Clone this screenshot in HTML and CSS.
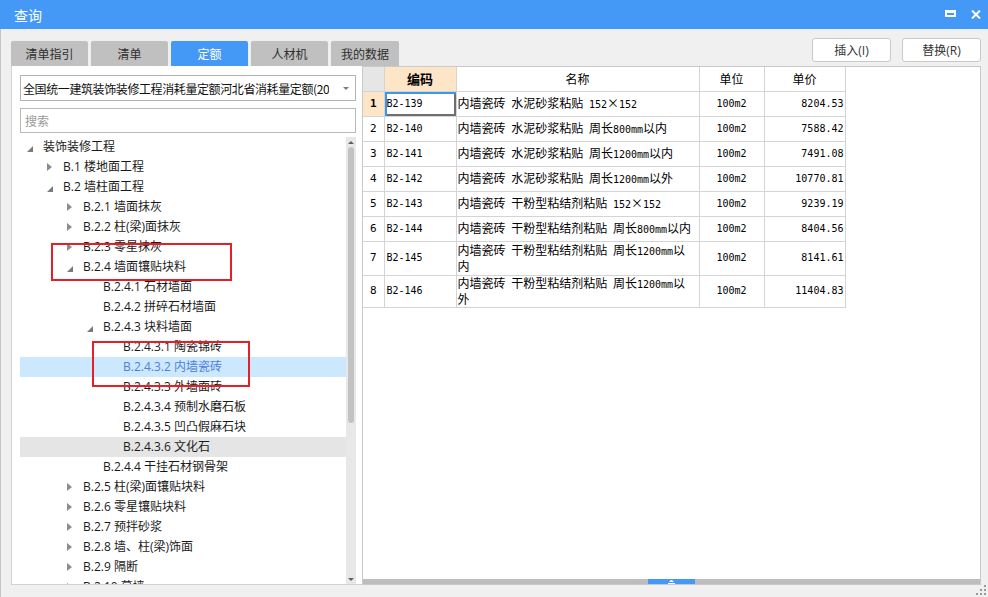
FILE: index.html
```html
<!DOCTYPE html>
<html>
<head>
<meta charset="utf-8">
<title>查询</title>
<link rel="stylesheet" href="styles.css">
</head>
<body>
<div class="window">
  <div class="titlebar">
    <span class="title">查询</span>
    <div class="winbtns">
      <svg class="maxbtn" width="11" height="7" viewBox="0 0 11 7"><path d="M0 0H11V7H0Z M2 3V5H9V3Z" fill="#fff" fill-rule="evenodd"/></svg>
      <svg class="closebtn" width="10" height="9" viewBox="0 0 10 9"><path d="M1 0.5L9 8.5M9 0.5L1 8.5" stroke="#fff" stroke-width="2"/></svg>
    </div>
  </div>
  <div class="body">
    <div class="toprow">
      <div class="tabs">
        <div class="tab">清单指引</div>
        <div class="tab">清单</div>
        <div class="tab active">定额</div>
        <div class="tab">人材机</div>
        <div class="tab narrow">我的数据</div>
      </div>
      <div class="actions">
        <button class="btn">插入(I)</button>
        <button class="btn">替换(R)</button>
      </div>
    </div>
    <div class="main">
      <div class="leftpanel">
        <div class="select">
          <span class="select-text">全国统一建筑装饰装修工程消耗量定额河北省消耗量定额(2015)</span>
          <span class="caret"></span>
        </div>
        <div class="search">搜索</div>
        <div class="treewrap">
          <div class="tree">
            <div class="row l0"><span class="tw open"></span>装饰装修工程</div>
            <div class="row l1"><span class="tw closed"></span>B.1 楼地面工程</div>
            <div class="row l1"><span class="tw open"></span>B.2 墙柱面工程</div>
            <div class="row l2"><span class="tw closed"></span>B.2.1 墙面抹灰</div>
            <div class="row l2"><span class="tw closed"></span>B.2.2 柱(梁)面抹灰</div>
            <div class="row l2"><span class="tw closed"></span>B.2.3 零星抹灰</div>
            <div class="row l2"><span class="tw open"></span>B.2.4 墙面镶贴块料</div>
            <div class="row l3"><span class="tw"></span>B.2.4.1 石材墙面</div>
            <div class="row l3"><span class="tw"></span>B.2.4.2 拼碎石材墙面</div>
            <div class="row l3"><span class="tw open"></span>B.2.4.3 块料墙面</div>
            <div class="row l4"><span class="tw"></span>B.2.4.3.1 陶瓷锦砖</div>
            <div class="row l4 selected"><span class="tw"></span>B.2.4.3.2 内墙瓷砖</div>
            <div class="row l4"><span class="tw"></span>B.2.4.3.3 外墙面砖</div>
            <div class="row l4"><span class="tw"></span>B.2.4.3.4 预制水磨石板</div>
            <div class="row l4"><span class="tw"></span>B.2.4.3.5 凹凸假麻石块</div>
            <div class="row l4 hover"><span class="tw"></span>B.2.4.3.6 文化石</div>
            <div class="row l3"><span class="tw"></span>B.2.4.4 干挂石材钢骨架</div>
            <div class="row l2"><span class="tw closed"></span>B.2.5 柱(梁)面镶贴块料</div>
            <div class="row l2"><span class="tw closed"></span>B.2.6 零星镶贴块料</div>
            <div class="row l2"><span class="tw closed"></span>B.2.7 预拌砂浆</div>
            <div class="row l2"><span class="tw closed"></span>B.2.8 墙、柱(梁)饰面</div>
            <div class="row l2"><span class="tw closed"></span>B.2.9 隔断</div>
            <div class="row l2"><span class="tw closed"></span>B.2.10 幕墙</div>
          </div>
          <div class="vscroll">
            <span class="sarrow up"></span>
            <div class="thumb"></div>
            <span class="sarrow down"></span>
          </div>
        </div>
        <div class="mark mark1"></div>
        <div class="mark mark2"></div>
      </div>
      <div class="rightpanel">
        <table class="grid">
          <colgroup>
            <col class="c-num"><col class="c-code"><col class="c-name"><col class="c-unit"><col class="c-price">
          </colgroup>
          <thead>
            <tr>
              <th class="num corner"></th>
              <th class="code-h">编码</th>
              <th>名称</th>
              <th>单位</th>
              <th>单价</th>
            </tr>
          </thead>
          <tbody>
            <tr>
              <td class="num cur">1</td>
              <td class="code focus">B2-139</td>
              <td class="name">内墙瓷砖 水泥砂浆粘贴 <span class="n">152</span>×<span class="n">152</span></td>
              <td class="unit">100m2</td>
              <td class="price">8204.53</td>
            </tr>
            <tr>
              <td class="num">2</td>
              <td class="code">B2-140</td>
              <td class="name">内墙瓷砖 水泥砂浆粘贴 周长<span class="n">800mm</span>以内</td>
              <td class="unit">100m2</td>
              <td class="price">7588.42</td>
            </tr>
            <tr>
              <td class="num">3</td>
              <td class="code">B2-141</td>
              <td class="name">内墙瓷砖 水泥砂浆粘贴 周长<span class="n">1200mm</span>以内</td>
              <td class="unit">100m2</td>
              <td class="price">7491.08</td>
            </tr>
            <tr>
              <td class="num">4</td>
              <td class="code">B2-142</td>
              <td class="name">内墙瓷砖 水泥砂浆粘贴 周长<span class="n">1200mm</span>以外</td>
              <td class="unit">100m2</td>
              <td class="price">10770.81</td>
            </tr>
            <tr>
              <td class="num">5</td>
              <td class="code">B2-143</td>
              <td class="name">内墙瓷砖 干粉型粘结剂粘贴 <span class="n">152</span>×<span class="n">152</span></td>
              <td class="unit">100m2</td>
              <td class="price">9239.19</td>
            </tr>
            <tr>
              <td class="num">6</td>
              <td class="code">B2-144</td>
              <td class="name">内墙瓷砖 干粉型粘结剂粘贴 周长<span class="n">800mm</span>以内</td>
              <td class="unit">100m2</td>
              <td class="price">8404.56</td>
            </tr>
            <tr class="tall">
              <td class="num">7</td>
              <td class="code">B2-145</td>
              <td class="name">内墙瓷砖 干粉型粘结剂粘贴 周长<span class="n">1200mm</span>以<br>内</td>
              <td class="unit">100m2</td>
              <td class="price">8141.61</td>
            </tr>
            <tr class="tall2">
              <td class="num">8</td>
              <td class="code">B2-146</td>
              <td class="name">内墙瓷砖 干粉型粘结剂粘贴 周长<span class="n">1200mm</span>以<br>外</td>
              <td class="unit">100m2</td>
              <td class="price">11404.83</td>
            </tr>
          </tbody>
        </table>
        <div class="hbar">
          <div class="handle">
            <svg width="7" height="4" viewBox="0 0 7 4"><path d="M2.5 0H4.5V1H5.5V2H1.5V1H2.5Z M0 3H7V4H0Z" fill="#fff"/></svg>
          </div>
        </div>
      </div>
    </div>
  </div>
  <svg class="grip" width="11" height="10" viewBox="0 0 11 10">
    <rect x="8" y="0" width="2" height="2" fill="#9a9a9a"/>
    <rect x="4" y="4" width="2" height="2" fill="#9a9a9a"/>
    <rect x="8" y="4" width="2" height="2" fill="#9a9a9a"/>
    <rect x="0" y="8" width="2" height="2" fill="#9a9a9a"/>
    <rect x="4" y="8" width="2" height="2" fill="#9a9a9a"/>
    <rect x="8" y="8" width="2" height="2" fill="#9a9a9a"/>
  </svg>
</div>
</body>
</html>
```

FILE: styles.css
```css
* {
  box-sizing: border-box;
  margin: 0;
  padding: 0;
}

body {
  margin: 0;
  background: #f0f0f0;
  font-family: "Open Sans", "Noto Sans CJK SC", sans-serif;
  font-size: 12px;
  color: #1a1a1a;
}

.window {
  width: 988px;
  height: 597px;
  position: relative;
  display: flex;
  flex-direction: column;
  background: #f0f0f0;
  overflow: hidden;
}

/* title bar */
.titlebar {
  height: 29px;
  flex: none;
  background: #4499f6;
  display: flex;
  align-items: center;
  padding: 0 7px 0 14px;
  color: #fff;
}

.title {
  font-family: "Noto Sans CJK SC", sans-serif;
  font-size: 14px;
  line-height: 20px;
}

.winbtns {
  margin-left: auto;
  display: flex;
  align-items: center;
  gap: 15px;
}

.maxbtn {
  margin-top: -2px;
}

/* body */
.body {
  flex: 1;
  min-height: 0;
  display: flex;
  flex-direction: column;
  border-left: 1px solid #c4c4c4;
  padding: 0 7px 12px 10px;
}

.toprow {
  height: 37px;
  flex: none;
  display: flex;
  align-items: flex-end;
}

.tabs {
  display: flex;
  gap: 3px;
}

.tab {
  width: 77px;
  height: 25px;
  background: #c0c0c0;
  border-radius: 2px 2px 0 0;
  display: flex;
  align-items: center;
  justify-content: center;
  font-family: "Noto Sans CJK SC", sans-serif;
  font-size: 12px;
  color: #2e2e2e;
}

.tab.narrow {
  width: 68px;
}

.tab.active {
  background: #4499f6;
  color: #fff;
}

.actions {
  margin-left: auto;
  align-self: flex-start;
  margin-top: 9px;
  display: flex;
  gap: 11px;
}

.btn {
  width: 79px;
  height: 24px;
  background: #fff;
  border: 1px solid #c9c9c9;
  border-radius: 3px;
  font-family: "Open Sans", "Noto Sans CJK SC", sans-serif;
  font-size: 12px;
  color: #333;
}

.main {
  flex: 1;
  display: flex;
  min-height: 0;
}

/* left panel */
.leftpanel {
  width: 351px;
  flex: none;
  position: relative;
  background: #fff;
  border-left: 1px solid #d2d2d2;
  border-bottom: 1px solid #d2d2d2;
  padding: 9px 6px 0 8px;
  display: flex;
  flex-direction: column;
  overflow: hidden;
}

.select {
  height: 26px;
  border: 1px solid #b3b3b3;
  display: flex;
  align-items: center;
  padding: 0 6px 0 2px;
  flex: none;
}

.select-text {
  width: 306px;
  overflow: hidden;
  white-space: nowrap;
  font-family: "Noto Sans CJK SC", sans-serif;
  font-size: 12px;
  letter-spacing: -0.4px;
  color: #111;
}

.caret {
  margin-left: auto;
  width: 0;
  height: 0;
  border-top: 3px solid #7a7a7a;
  border-left: 3px solid transparent;
  border-right: 3px solid transparent;
}

.search {
  margin-top: 7px;
  height: 25px;
  border: 1px solid #b8b8b8;
  padding-left: 4px;
  line-height: 23px;
  font-family: "Noto Sans CJK SC", sans-serif;
  font-size: 12px;
  color: #9a9a9a;
  flex: none;
}

.treewrap {
  margin-top: 4px;
  flex: 1;
  min-height: 0;
  display: flex;
  overflow: hidden;
}

.tree {
  width: 326px;
  flex: none;
  overflow: hidden;
}

.row {
  height: 20px;
  line-height: 20px;
  white-space: nowrap;
  display: flex;
  align-items: flex-start;
  color: #1a1a1a;
}

.row.l0 { padding-left: 7px; }
.row.l1 { padding-left: 27px; }
.row.l2 { padding-left: 47px; }
.row.l3 { padding-left: 67px; }
.row.l4 { padding-left: 87px; }

.row.selected {
  background: #cce8ff;
  color: #4f80d8;
}

.row.hover {
  background: #e5e5e5;
}

.tw {
  width: 16px;
  height: 20px;
  flex: none;
}

.tw.closed::before {
  content: "";
  display: block;
  margin-top: 6px;
  width: 0;
  height: 0;
  border-left: 5px solid #8c8c8c;
  border-top: 4px solid transparent;
  border-bottom: 4px solid transparent;
}

.tw.open::before {
  content: "";
  display: block;
  margin-top: 9px;
  width: 0;
  height: 0;
  border-bottom: 6px solid #7a7a7a;
  border-left: 6px solid transparent;
}

.vscroll {
  width: 10px;
  flex: none;
  background: #e8e8e8;
  display: flex;
  flex-direction: column;
  align-items: center;
}

.sarrow {
  width: 0;
  height: 0;
  border-left: 3px solid transparent;
  border-right: 3px solid transparent;
}

.sarrow.up {
  margin-top: 4px;
  border-bottom: 3px solid #606060;
}

.sarrow.down {
  margin-top: auto;
  margin-bottom: 3px;
  border-top: 3px solid #606060;
}

.thumb {
  margin-top: 3px;
  width: 6px;
  height: 276px;
  border-radius: 3px;
  background: #c2c2c2;
}

.mark {
  position: absolute;
  border: 2px solid #e41f26;
}

.mark1 {
  left: 39px;
  top: 177px;
  width: 181px;
  height: 38px;
}

.mark2 {
  left: 80px;
  top: 275px;
  width: 158px;
  height: 46px;
}

/* right panel */
.rightpanel {
  flex: 1;
  background: #fff;
  border: 1px solid #c9c9c9;
  display: flex;
  flex-direction: column;
  min-width: 0;
  overflow: hidden;
}

.grid {
  border-collapse: collapse;
  table-layout: fixed;
  width: 482px;
  font-family: "Noto Sans CJK SC", sans-serif;
  font-size: 12px;
  color: #000;
}

.c-num { width: 21px; }
.c-code { width: 72px; }
.c-name { width: 243px; }
.c-unit { width: 65px; }
.c-price { width: 81px; }

.grid th,
.grid td {
  border: 1px solid #d4d4d4;
  white-space: nowrap;
  overflow: hidden;
  vertical-align: middle;
}

.grid th {
  height: 24px;
  border-top: 0;
  font-weight: normal;
  text-align: center;
  line-height: 16px;
}

.grid tr > :first-child {
  border-left: 0;
}

.grid td {
  height: 25px;
  line-height: 14px;
}

.grid tr.tall td {
  height: 34px;
}

.grid tr.tall2 td {
  height: 32px;
}

.grid th.corner {
  background: #e6e6e6;
}

.grid th.code-h {
  background: #fde5c8;
  font-weight: bold;
  font-size: 13px;
}

.grid td.num {
  text-align: center;
  font-family: "DejaVu Sans Mono", monospace;
  font-size: 11px;
}

.grid td.num.cur {
  background: #fde5c8;
  font-weight: bold;
}

.grid td.code {
  padding-left: 2px;
  font-family: "DejaVu Sans Mono", monospace;
  font-size: 10px;
}

.grid td.focus {
  box-shadow: inset 2px 2px 0 #3d95f1, inset -2px -2px 0 #6e6e6e;
}

.grid td.name {
  padding-left: 1px;
  word-spacing: 3px;
}

.grid td.unit {
  text-align: center;
  font-family: "DejaVu Sans Mono", monospace;
  font-size: 10px;
}

.grid td.price {
  text-align: right;
  padding-right: 1px;
  font-family: "DejaVu Sans Mono", monospace;
  font-size: 10px;
}

.n {
  font-family: "DejaVu Sans Mono", monospace;
  font-size: 10px;
  word-spacing: 0;
}

.hbar {
  margin-top: auto;
  height: 5px;
  flex: none;
  background: #bdbdbd;
  display: flex;
  justify-content: center;
}

.handle {
  width: 47px;
  height: 5px;
  background: #4499f6;
  display: flex;
  align-items: center;
  justify-content: center;
}

.grip {
  position: absolute;
  right: 1px;
  bottom: 2px;
}
```
